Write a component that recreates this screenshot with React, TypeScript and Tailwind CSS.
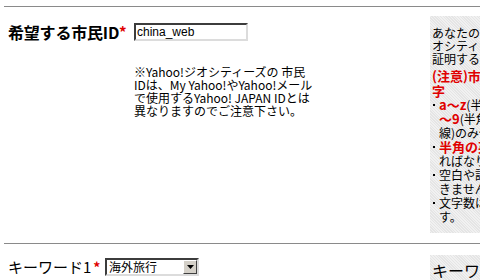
export default function App() {
  const grayBg =
    "bg-[#ececec] bg-[repeating-linear-gradient(45deg,#e5e5e5_0px,#e5e5e5_1px,#f1f1f1_1px,#f1f1f1_2px)]";
  const red = "text-[#e00000]";
  const Bullet = ({ children }: { children: React.ReactNode }) => (
    <div className="flex">
      <div className="w-[7px] shrink-0 flex justify-start pt-[6px] pl-[1px]">
        <div className="w-[2px] h-[2px] bg-black" />
      </div>
      <div className="flex flex-col">{children}</div>
    </div>
  );
  return (
    <div className="w-[480px] h-[280px] overflow-hidden bg-white text-black font-['Noto_Sans_CJK_JP',sans-serif]">
      <div className="w-[660px] pl-[4px] pt-[6px]">
        {/* Section 1 */}
        <section className="border-t border-[#8a8a8a] flex">
          <div className="w-[426px] shrink-0 pt-[16px] pl-[4px]">
            <div className="flex items-center h-[18px]">
              <div className="w-[126px] shrink-0 flex items-center whitespace-nowrap">
                <span className="text-[16px] font-bold leading-[18px] tracking-[-0.2px]">希望する市民ID</span>
                <span className={`${red} text-[15px] font-bold leading-[18px]`}>*</span>
              </div>
              <div className="w-[114px] h-[18px] border-2 border-t-[#3c3c3c] border-l-[#3c3c3c] border-r-[#dcdcdc] border-b-[#dcdcdc] bg-white flex items-center pl-[1px] font-['Liberation_Sans',sans-serif] text-[12px] leading-[14px]">
                china_web
              </div>
            </div>
            <p className="ml-[126px] mt-[24px] text-[12px] leading-[13px] whitespace-nowrap">
              ※Yahoo!ジオシティーズの 市民
              <br />
              IDは、My Yahoo!やYahoo!メール
              <br />
              で使用するYahoo! JAPAN IDとは
              <br />
              異なりますのでご注意下さい。
            </p>
          </div>
          <div className={`mt-[9px] mb-[10px] w-[180px] shrink-0 ${grayBg} pt-[10px] pb-[9px] pl-[2px] whitespace-nowrap overflow-hidden`}>
            <div className="text-[12px] leading-[13px]">
              <div>あなたのジオシティーズでの</div>
              <div>オシティーズでの身分を</div>
              <div>証明するものです。</div>
            </div>
            <div className={`mt-[3px] ${red} font-bold text-[13px] leading-[15px]`}>
              <div>(注意)市民IDに使える文</div>
              <div>字</div>
            </div>
            <div className="text-[12px] leading-[14px]">
              <Bullet>
                <div>
                  <span className={`${red} font-bold text-[13px]`}>a〜z</span>(半角英小文字)、
                  <span className={`${red} font-bold text-[13px]`}>0</span>
                </div>
                <div>
                  <span className={`${red} font-bold text-[13px]`}>〜9</span>(半角数字)、_(下
                </div>
                <div>線)のみ使用可能です。</div>
              </Bullet>
              <Bullet>
                <div>
                  <span className={`${red} font-bold text-[13px]`}>半角の英字で始まらなけ</span>
                </div>
                <div>ればなりません。</div>
              </Bullet>
              <Bullet>
                <div>空白や記号は使用で</div>
                <div>きません。</div>
              </Bullet>
              <Bullet>
                <div>文字数は3〜20文字で</div>
                <div>す。</div>
              </Bullet>
            </div>
          </div>
        </section>

        {/* Section 2 */}
        <section className="border-t border-[#8a8a8a] flex">
          <div className="w-[426px] shrink-0 pt-[14px] pl-[4px]">
            <div className="flex items-center h-[18px]">
              <div className="w-[97px] shrink-0 flex items-center whitespace-nowrap">
                <span className="text-[15px] leading-[18px]">キーワード1</span>
                <span className={`${red} text-[14px] font-bold leading-[18px] ml-[2px]`}>*</span>
              </div>
              <div className="w-[94px] h-[18px] border-2 border-t-[#3c3c3c] border-l-[#3c3c3c] border-r-[#dcdcdc] border-b-[#dcdcdc] bg-white flex items-center justify-between">
                <span className="text-[12px] leading-[14px] pl-[2px]">海外旅行</span>
                <div className="w-[14px] h-[14px] bg-[#d4d0c8] border border-t-white border-l-white border-r-[#404040] border-b-[#404040] flex items-center justify-center">
                  <svg width="7" height="4" viewBox="0 0 7 4">
                    <polygon points="0,0 7,0 3.5,4" fill="#000" />
                  </svg>
                </div>
              </div>
            </div>
          </div>
          <div className={`mt-[11px] w-[180px] h-[60px] shrink-0 ${grayBg} pt-[5px] pl-[2px] whitespace-nowrap`}>
            <div className="text-[16px] leading-[20px]">キーワードとは</div>
          </div>
        </section>
      </div>
    </div>
  );
}
